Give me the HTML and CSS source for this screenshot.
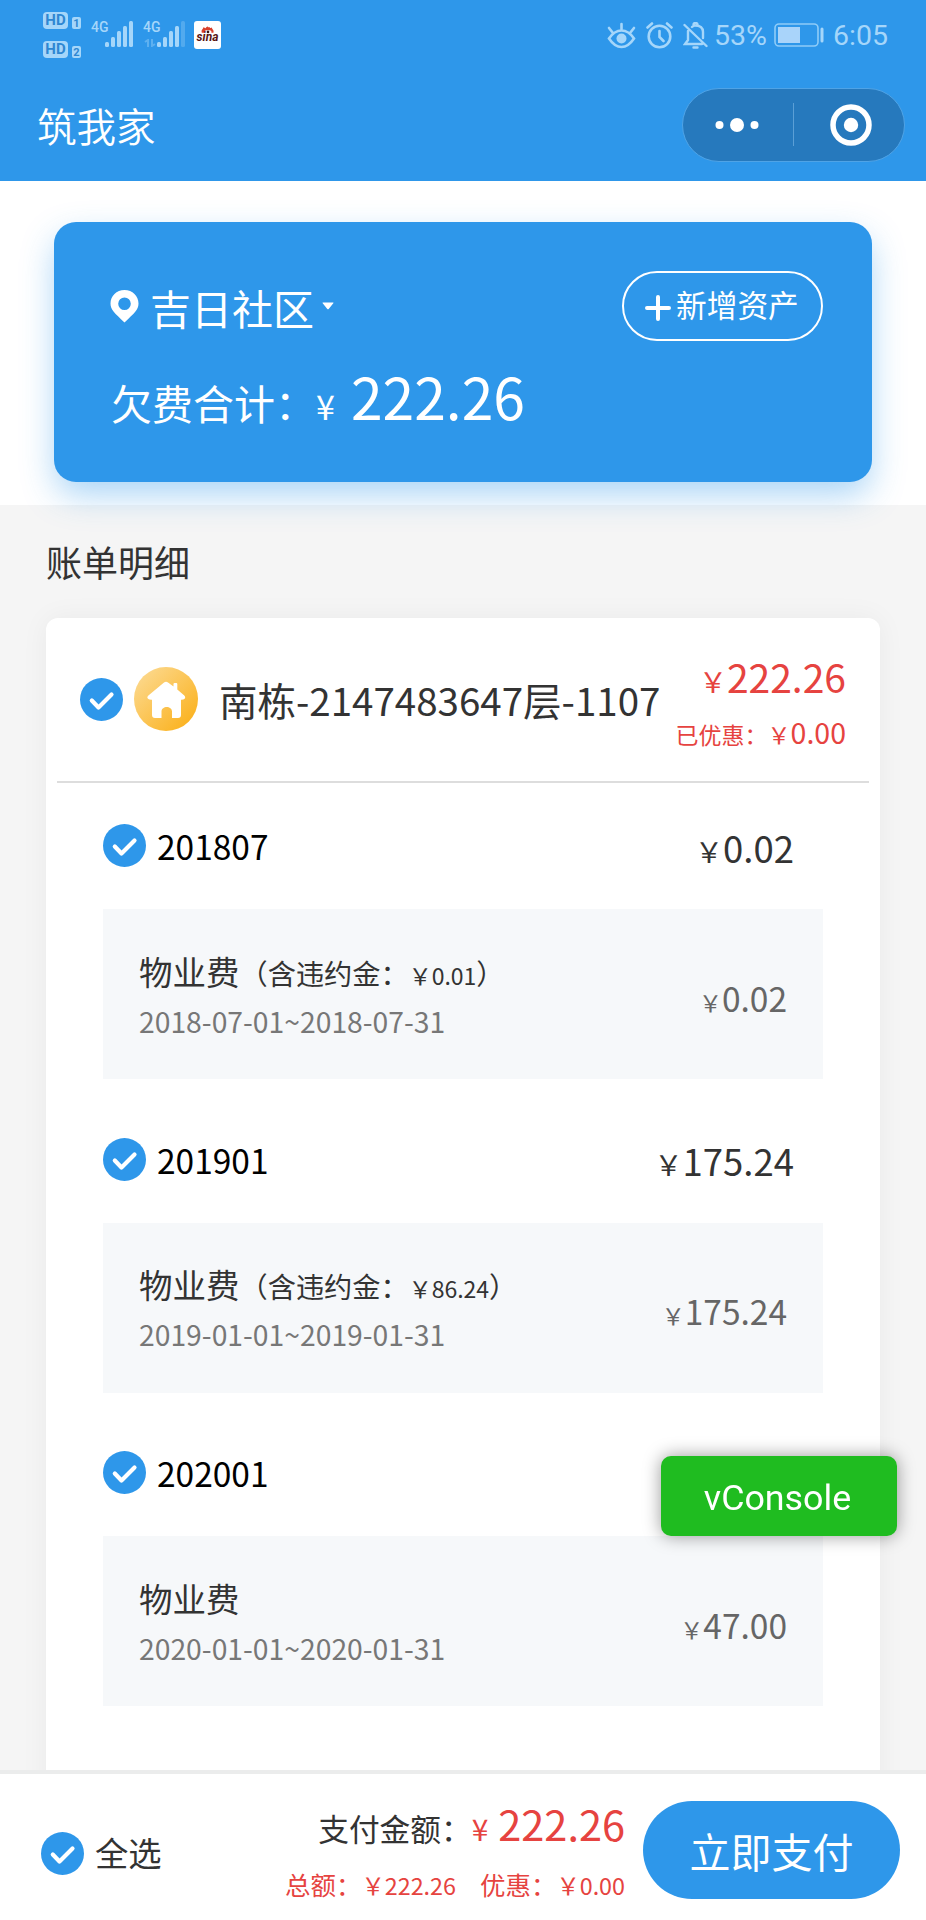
FILE: index.html
```
<!DOCTYPE html>
<html lang="zh-CN">
<head>
    <meta charset="UTF-8">
    <meta name="viewport" content="width=device-width, initial-scale=1.0">
    <title>筑我家</title>
    <link rel="stylesheet" href="styles.css">
</head>
<body>
    <!-- shared icons -->
    <svg class="sprite" width="0" height="0">
        <symbol id="check" viewBox="0 0 43 43">
            <circle cx="21.5" cy="21.5" r="21.5" fill="#2e97ea"/>
            <path d="M11.800 22.500l6.700 7 13-13" fill="none" stroke="#fff" stroke-width="4.200" stroke-linecap="round" stroke-linejoin="round"/>
        </symbol>
    </svg>

    <header>
        <div class="status-bar">
            <div class="status-left">
                <div class="hd-list">
                    <div class="hd"><span class="hd-tag">HD</span><span class="hd-num">1</span></div>
                    <div class="hd"><span class="hd-tag">HD</span><span class="hd-num">2</span></div>
                </div>
                <div class="signal">
                    <span>4G</span>
                    <svg width="30" height="28" viewBox="0 0 30 28" fill="#a5d6fa">
                        <rect x="1" y="22" width="4" height="5" rx="1.5"/><rect x="7" y="17" width="4" height="10" rx="1.5"/><rect x="13" y="11" width="4" height="16" rx="1.5"/><rect x="19" y="6" width="4" height="21" rx="1.5"/><rect x="25" y="1" width="4" height="26" rx="1.5"/>
                    </svg>
                </div>
                <div class="signal">
                    <span>4G</span>
                    <svg width="30" height="28" viewBox="0 0 30 28" fill="#a5d6fa">
                        <rect x="1" y="22" width="4" height="5" rx="1.5"/><rect x="7" y="17" width="4" height="10" rx="1.5"/><rect x="13" y="11" width="4" height="16" rx="1.5"/><rect x="19" y="6" width="4" height="21" rx="1.5"/><rect x="25" y="1" width="4" height="26" rx="1.5" opacity=".3"/>
                    </svg>
                    <svg class="traffic" width="12" height="8" viewBox="0 0 12 8" fill="none" stroke="#a5d6fa" stroke-width="2" opacity=".4">
                        <path d="M1 3l3-2v7M8 0v7l3-2"/>
                    </svg>
                </div>
                <div class="sina">
                    <svg width="14" height="8" viewBox="0 0 18 9">
                        <path d="M1 8C0 3 3 4 3 1c2 0 2 2 3 1 1-1 1-2 3-2 0 2 2 0 3 2 1 0 1 0 2-1 0 3 3 3 2 7z" fill="#d9402c"/>
                        <ellipse cx="9" cy="7" rx="4.5" ry="2.6" fill="#fff"/><circle cx="9" cy="7" r="1.7" fill="#3a1212"/>
                    </svg>
                    <span>sina</span>
                </div>
            </div>
            <div class="status-right">
                <svg width="29" height="27" viewBox="0 0 29 27" fill="none" stroke="#a5d6fa" stroke-width="2.6" stroke-linecap="round">
                    <path d="M2 16.500C6 10.500 10 8.500 14.500 8.500S23 10.500 27 16.500C23 22.500 19 25 14.500 25S6 22.500 2 16.500z"/>
                    <circle cx="14.500" cy="16.500" r="5" fill="#a5d6fa" stroke="none"/>
                    <path d="M14.500 2v5M2 6l4 5M27 6l-4 5"/>
                </svg>
                <svg width="27" height="27" viewBox="0 0 27 27" fill="none" stroke="#a5d6fa" stroke-width="2.600" stroke-linecap="round">
                    <circle cx="13.500" cy="14.500" r="10.800"/>
                    <path d="M13.500 9v6l4 4M1.500 5.500L6 1.500M25.500 5.500L21 1.500"/>
                </svg>
                <svg width="25" height="27" viewBox="0 0 25 27" fill="none" stroke="#a5d6fa" stroke-width="2.400" stroke-linecap="round">
                    <path d="M1.500 3l22 21M5 9v9l-3 4h17M9 5c1-1 2-1.500 3-1.500C17 3.500 20 6 20 10v6M10.500 2.500c0-2 4-2 4 0M10.500 25.500h4"/>
                </svg>
                <span class="percent">53%</span>
                <svg class="battery" width="50" height="24" viewBox="0 0 50 24" fill="none">
                    <rect x="1" y="1" width="43" height="22" rx="4" stroke="#8fccf8" stroke-width="1.600"/>
                    <rect x="4" y="4" width="22" height="16" fill="#a9d4fa"/>
                    <path d="M48 6v12" stroke="#a5d6fa" stroke-width="3" stroke-linecap="round"/>
                </svg>
                <span class="time">6:05</span>
            </div>
        </div>
        <div class="nav-bar">
            <h1>筑我家</h1>
            <div class="capsule">
                <svg width="220" height="71" viewBox="0 0 220 71" fill="#fff">
                    <circle cx="36.500" cy="36" r="4"/><circle cx="54" cy="36" r="7"/><circle cx="71.500" cy="36" r="4"/>
                    <path d="M110.500 14v43" stroke="#5b9fd6" stroke-width="1"/>
                    <circle cx="168" cy="36" r="18" fill="none" stroke="#fff" stroke-width="5.500"/><circle cx="168" cy="36" r="7.200"/>
                </svg>
            </div>
        </div>
    </header>

    <main>
        <section class="top">
            <div class="summary">
                <div class="summary-row">
                    <div class="community">
                        <svg width="29" height="33" viewBox="0 0 29 33">
                            <path fill="#fff" fill-rule="evenodd" d="M14.500 0C6.500 0 .5 6 .5 13.500c0 6 4 9.500 14 19 10-9.500 14-13 14-19C28.500 6 22.500 0 14.500 0zm0 7.500a6.300 6.300 0 1 1 0 12.600 6.300 6.300 0 0 1 0-12.600z"/>
                        </svg>
                        <span>吉日社区</span>
                        <svg class="caret" width="12" height="8" viewBox="0 0 12 8"><path d="M1 .5h10q1 0 .3.800L6.700 7q-.7.700-1.400 0L.7 1.300Q0 .5 1 .5z" fill="#fff"/></svg>
                    </div>
                    <button class="add-btn">
                        <svg width="26" height="26" viewBox="0 0 26 26"><path d="M13 2v22M2 13h22" stroke="#fff" stroke-width="4" stroke-linecap="round"/></svg>
                        <span>新增资产</span>
                    </button>
                </div>
                <div class="debt">欠费合计：<span class="yen">¥</span><span class="num">222.26</span></div>
            </div>
        </section>

        <h2>账单明细</h2>

        <section class="bill">
            <div class="bill-head">
                <svg class="check"><use href="#check"/></svg>
                <svg class="house" viewBox="0 0 64 64">
                    <defs>
                        <linearGradient id="gold" x1="0" y1="0" x2="1" y2="1">
                            <stop offset="0.1" stop-color="#fcd88c"/>
                            <stop offset="0.9" stop-color="#fbb21f"/>
                        </linearGradient>
                    </defs>
                    <circle cx="32" cy="32" r="32" fill="url(#gold)"/>
                    <path fill="#fff" d="M30 15.500q2-1.500 4 0l5.500 4V17q0-1 1-1h1.800q1 0 1 1v5.500l7 6q1.800 2 0 3.500-.8.800-3.300.7V48q0 3-3 3h-6v-6.500c0-6-10.500-6-10.500 0V51H21q-3 0-3-3V32.700q-2.500.1-3.600-.7-2.100-1.500 0-3.500z"/>
                </svg>
                <h3>南栋-2147483647层-1107</h3>
                <div class="bill-total">
                    <p class="money total"><i>￥</i>222.26</p>
                    <p class="money saved"><i>已优惠：￥</i>0.00</p>
                </div>
            </div>

            <div class="month">
                <svg class="check"><use href="#check"/></svg>
                <span class="month-name">201807</span>
                <span class="money month-sum"><i>￥</i>0.02</span>
            </div>
            <div class="fee">
                <div>
                    <p class="fee-name">物业费<span>（含违约金：<i>￥0.01</i>）</span></p>
                    <p class="fee-date">2018-07-01~2018-07-31</p>
                </div>
                <span class="money fee-sum"><i>￥</i>0.02</span>
            </div>

            <div class="month">
                <svg class="check"><use href="#check"/></svg>
                <span class="month-name">201901</span>
                <span class="money month-sum"><i>￥</i>175.24</span>
            </div>
            <div class="fee">
                <div>
                    <p class="fee-name">物业费<span>（含违约金：<i>￥86.24</i>）</span></p>
                    <p class="fee-date">2019-01-01~2019-01-31</p>
                </div>
                <span class="money fee-sum"><i>￥</i>175.24</span>
            </div>

            <div class="month">
                <svg class="check"><use href="#check"/></svg>
                <span class="month-name">202001</span>
                <span class="money month-sum"><i>￥</i>47.00</span>
            </div>
            <div class="fee">
                <div>
                    <p class="fee-name">物业费</p>
                    <p class="fee-date">2020-01-01~2020-01-31</p>
                </div>
                <span class="money fee-sum"><i>￥</i>47.00</span>
            </div>
        </section>
    </main>

    <footer>
        <svg class="check"><use href="#check"/></svg>
        <span class="all">全选</span>
        <div class="pay-info">
            <p class="pay-sum">支付金额：<span class="yen">¥</span><span class="num">222.26</span></p>
            <p class="pay-detail"><span>总额：<i>￥222.26</i></span><span>优惠：<i>￥0.00</i></span></p>
        </div>
        <button class="pay-btn">立即支付</button>
    </footer>

    <div class="vconsole">vConsole</div>
</body>
</html>
```
FILE: styles.css
```
* { box-sizing: border-box; margin: 0; padding: 0; }
body {
    width: 926px;
    height: 1920px;
    overflow: hidden;
    display: flex;
    flex-direction: column;
    background-color: #f5f5f5;
    color: #333;
    font-family: "Noto Sans CJK SC", sans-serif;
}
h1, h2, h3 { font-weight: normal; }
i { font-style: normal; line-height: 0; }
svg { display: block; flex: none; }
button { border: none; font-family: inherit; color: #fff; white-space: nowrap; }
.sprite { position: absolute; }
.check { width: 43px; height: 43px; }

/* Header */
header { flex: none; height: 181px; background-color: #2e97ea; color: #fff; }
.status-bar {
    display: flex;
    justify-content: space-between;
    height: 70px;
    padding: 0 38px 0 43px;
    font-family: Roboto, sans-serif;
    color: #a5d6fa;
}
.status-left { display: flex; align-items: flex-start; }
.hd-list { width: 48px; padding-top: 12px; }
.hd { display: flex; align-items: flex-end; gap: 4px; height: 17px; margin-bottom: 12px; }
.hd-tag {
    width: 25px;
    height: 17px;
    border-radius: 4px;
    background-color: #a5d6fa;
    color: #2e87d2;
    font-size: 15px;
    font-weight: bold;
    line-height: 17px;
    text-align: center;
}
.hd-num {
    width: 9px;
    height: 12px;
    border-radius: 2px;
    background-color: #a5d6fa;
    color: #2e87d2;
    font-size: 11px;
    font-weight: bold;
    line-height: 13px;
    text-align: center;
}
.signal { position: relative; display: flex; width: 52px; padding-top: 20px; }
.signal span { width: 13px; font-size: 14px; font-weight: 500; line-height: 14px; white-space: nowrap; }
.traffic { position: absolute; left: 1px; top: 39px; }
.sina {
    display: flex;
    flex-direction: column;
    align-items: center;
    width: 27px;
    height: 28px;
    margin: 21px 0 0 -1px;
    padding-top: 5px;
    border-radius: 3px;
    background-color: #fff;
}
.sina span { margin-top: -2px; color: #5a1414; font-size: 12px; font-weight: 700; font-style: italic; line-height: 11px; }
.status-right { display: flex; align-items: center; height: 70px; }
.status-right svg { margin-right: 10px; }
.status-right svg:nth-child(3) { margin-right: 6px; }
.status-right .battery { margin-right: 9px; }
.percent { width: 60px; font-size: 28.5px; }
.time { font-size: 28.5px; }
.nav-bar { display: flex; justify-content: space-between; padding: 18px 21px 0 37px; }
.nav-bar h1 { font-size: 39.5px; line-height: 74px; font-weight: 350; }
.capsule { width: 223px; height: 74px; border: 1.5px solid #4fa3e6; border-radius: 37px; background-color: #2679bd; }

/* Summary card */
.top { height: 324px; padding: 41px 54px 0; background-color: #fff; }
.summary {
    height: 260px;
    padding: 49px 49px 0 56px;
    border-radius: 22px;
    background-color: #2e97ea;
    box-shadow: 0 14px 34px -2px rgba(46, 151, 234, 0.42);
    color: #fff;
}
.summary-row { display: flex; justify-content: space-between; }
.community { display: flex; align-items: center; height: 70px; font-size: 41px; }
.community span { margin: 1px 8px 0 11px; line-height: 60px; }
.add-btn {
    display: flex;
    align-items: center;
    gap: 5px;
    width: 201px;
    height: 70px;
    padding-left: 21px;
    border: 2.5px solid #fff;
    border-radius: 35px;
    background: none;
    font-size: 30.7px;
}
.add-btn svg { margin-top: 3px; }
.add-btn span { margin-top: -4px; line-height: 50px; }
.debt { margin-top: 21px; padding-left: 1px; font-size: 41px; line-height: 80px; white-space: nowrap; }
.debt span { line-height: 0; }
.debt .yen { font-size: 34px; margin-right: 16px; }
.debt .num { font-size: 57px; }

h2 { height: 113px; padding-left: 46px; font-size: 36px; line-height: 113px; }

/* Bills */
main { flex: 1; min-height: 0; overflow: hidden; }
.bill {
    height: 1300px;
    margin: 0 46px;
    border-radius: 12px;
    background-color: #fff;
    box-shadow: 0 0 28px rgba(0, 30, 20, 0.05);
}
.bill-head {
    display: flex;
    align-items: center;
    height: 164.5px;
    margin: 0 11px;
    padding: 0 23px;
    border-bottom: 2.5px solid #ddd;
    white-space: nowrap;
}
.house { width: 64px; height: 64px; margin: 0 21px 0 11px; }
.bill-head h3 { font-size: 38.5px; line-height: 56px; }
.bill-total { margin-left: auto; padding-top: 10px; color: #e64340; text-align: right; }
.money { white-space: nowrap; }
.total { font-size: 39px; line-height: 56px; }
.total i { font-size: 28px; }
.saved { font-size: 28.5px; line-height: 56px; }
.saved i { font-size: 23px; }
.month { display: flex; align-items: center; height: 126.5px; padding: 0 86px 0 57px; }
.month-name { margin-left: 11px; color: #000; font-size: 33.5px; }
.month-sum { margin-left: auto; padding-top: 3px; font-size: 36.5px; }
.month-sum i { font-size: 28px; }
.fee {
    display: flex;
    justify-content: space-between;
    align-items: center;
    width: 720px;
    height: 170px;
    margin: 0 0 17px 57px;
    padding: 0 36px;
    background-color: #f6f8fa;
}
.fee-name { padding-top: 2px; font-size: 33.5px; line-height: 51px; white-space: nowrap; }
.fee-name span { font-size: 28.2px; line-height: 0; }
.fee-name i { font-size: 23px; }
.fee-date { color: #777; font-size: 28.3px; line-height: 50px; }
.fee-sum { padding-top: 6px; color: #666; font-size: 33.5px; }
.fee-sum i { font-size: 23px; }

/* Footer */
footer {
    flex: none;
    display: flex;
    align-items: flex-start;
    height: 150px;
    padding: 26px 26px 0 41px;
    border-top: 4.5px solid #ebecec;
    background-color: #fff;
    white-space: nowrap;
}
footer .check { margin-top: 32px; }
.all { margin: 27px 0 0 11px; font-size: 33.3px; line-height: 50px; }
.pay-info { margin-left: auto; text-align: right; }
.pay-sum { font-size: 30.7px; line-height: 56px; }
.pay-sum span { color: #e64340; line-height: 0; }
.pay-sum .yen { font-size: 30px; margin-right: 10px; }
.pay-sum .num { font-size: 41.5px; }
.pay-detail { display: flex; justify-content: flex-end; gap: 24px; color: #e64340; font-size: 25.5px; line-height: 56px; }
.pay-detail i { font-size: 23.3px; }
.pay-btn {
    width: 257px;
    height: 98px;
    margin: 1px 0 0 18px;
    border-radius: 49px;
    background-color: #2e97ea;
    font-size: 41px;
    line-height: 98px;
}

/* Debug button floating over the page */
.vconsole {
    position: fixed;
    right: 29px;
    top: 1456px;
    width: 236px;
    height: 80px;
    padding-right: 3px;
    border-radius: 10px;
    background-color: #1fbc20;
    box-shadow: 0 0 18px rgba(0, 0, 0, 0.4);
    color: #fff;
    font-family: Roboto, sans-serif;
    font-size: 35.8px;
    line-height: 84px;
    text-align: center;
}
```
